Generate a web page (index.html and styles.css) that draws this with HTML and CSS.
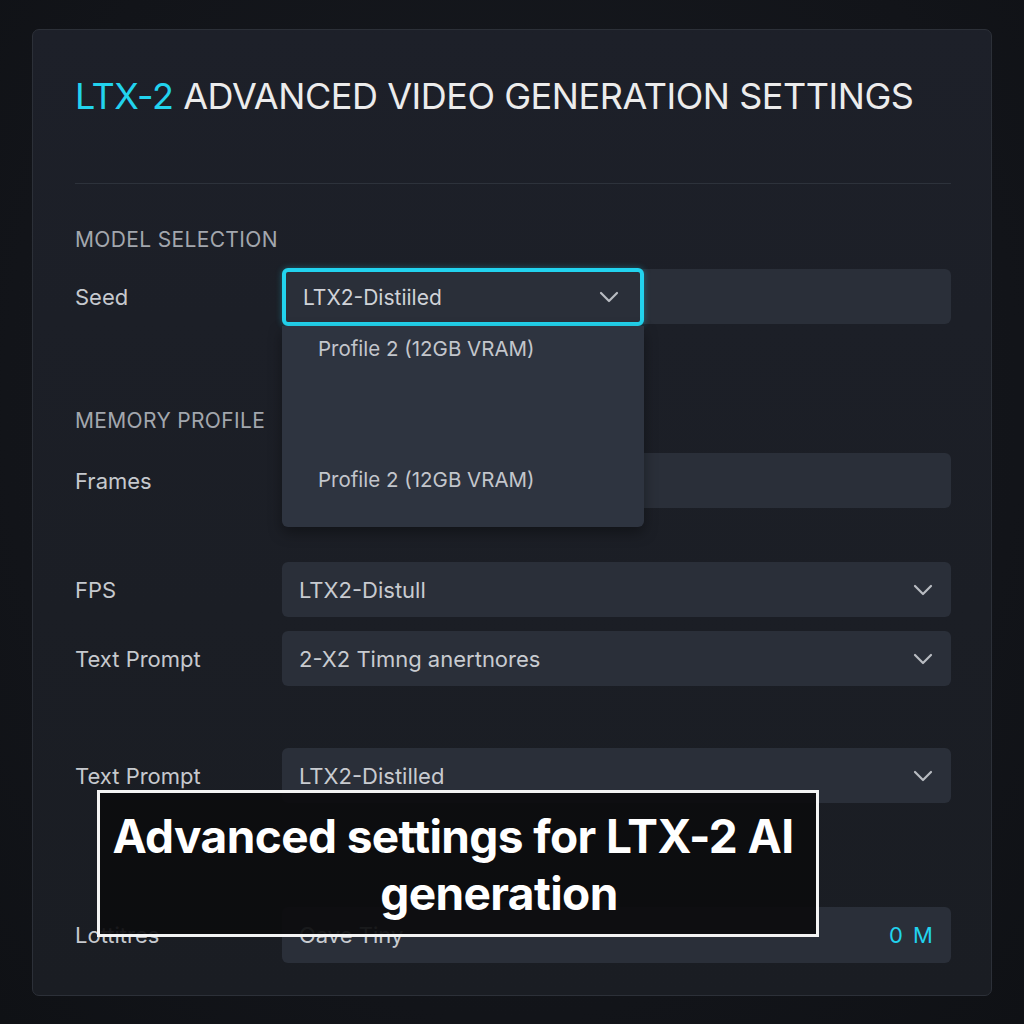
FILE: index.html
```html
<!DOCTYPE html>
<html>
<head>
<meta charset="utf-8">
<link rel="stylesheet" href="styles.css">
</head>
<body>
<div class="card">
  <h1 class="title"><span class="accent">LTX-2</span> ADVANCED VIDEO GENERATION SETTINGS</h1>
  <div class="divider"></div>

  <div class="section s-model">MODEL SELECTION</div>
  <div class="row r-seed">
    <div class="label">Seed</div>
    <div class="field empty">
      <div class="select-open">
        <div class="select-box">
          <span>LTX2-Distiiled</span>
          <svg class="chev" viewBox="0 0 20 12" width="20" height="12"><path d="M2 2 L10 10 L18 2" fill="none" stroke="#b9bcc2" stroke-width="2.2" stroke-linecap="round" stroke-linejoin="round"/></svg>
        </div>
        <div class="menu">
          <div class="menu-item">Profile 2 (12GB VRAM)</div>
          <div class="menu-item">Profile 2 (12GB VRAM)</div>
        </div>
      </div>
    </div>
  </div>

  <div class="section s-memory">MEMORY PROFILE</div>
  <div class="row r-frames">
    <div class="label">Frames</div>
    <div class="field empty"></div>
  </div>

  <div class="row r-fps">
    <div class="label">FPS</div>
    <div class="field">
      <span>LTX2-Distull</span>
      <svg class="chev" viewBox="0 0 20 12" width="20" height="12"><path d="M2 2 L10 10 L18 2" fill="none" stroke="#b9bcc2" stroke-width="2.2" stroke-linecap="round" stroke-linejoin="round"/></svg>
    </div>
  </div>

  <div class="row r-prompt1">
    <div class="label">Text Prompt</div>
    <div class="field">
      <span>2-X2 Timng anertnores</span>
      <svg class="chev" viewBox="0 0 20 12" width="20" height="12"><path d="M2 2 L10 10 L18 2" fill="none" stroke="#b9bcc2" stroke-width="2.2" stroke-linecap="round" stroke-linejoin="round"/></svg>
    </div>
  </div>

  <div class="row r-prompt2">
    <div class="label">Text Prompt</div>
    <div class="field">
      <span>LTX2-Distilled</span>
      <svg class="chev" viewBox="0 0 20 12" width="20" height="12"><path d="M2 2 L10 10 L18 2" fill="none" stroke="#b9bcc2" stroke-width="2.2" stroke-linecap="round" stroke-linejoin="round"/></svg>
    </div>
  </div>

  <div class="row r-last">
    <div class="label">Lottitres</div>
    <div class="field">
      <span>Oave Tiny</span>
      <span class="value">0 M</span>
    </div>
  </div>

  <div class="caption"><span class="cap-line">Advanced settings for LTX-2 AI</span><span class="cap-line cap-second">generation</span></div>
</div>
</body>
</html>
```

FILE: styles.css
```css
* { box-sizing: border-box; }
html, body { margin: 0; padding: 0; }
body {
  width: 1024px;
  height: 1024px;
  background: radial-gradient(ellipse at 50% 40%, #171a20 0%, #121419 70%, #0f1115 100%);
  font-family: "Inter", "Noto Sans", sans-serif;
  overflow: hidden;
}
.card {
  position: relative;
  margin: 29px 32px 0 32px;
  width: 960px;
  height: 967px;
  background: linear-gradient(180deg, #1d2029 0%, #1b1e25 60%, #1a1d23 100%);
  border: 1px solid #2c3038;
  border-radius: 7px;
  padding: 44px 40px 0 42px;
}
.title {
  margin: 0;
  height: 44px;
  line-height: 44px;
  font-size: 36px;
  font-weight: 400;
  color: #ececec;
  letter-spacing: -0.45px;
  white-space: nowrap;
}
.accent { color: #22d3ee; }
.divider {
  margin-top: 65px;
  height: 1px;
  background: #2d323b;
}
.section {
  height: 24px;
  line-height: 24px;
  font-size: 21px;
  color: #a3a7ae;
  letter-spacing: 0.35px;
}
.s-model { margin-top: 44px; }
.s-memory { margin-top: 85px; }
.row {
  display: flex;
  align-items: center;
  height: 55px;
}
.r-seed { margin-top: 17px; }
.r-frames { margin-top: 20px; }
.r-fps { margin-top: 54px; }
.r-prompt1 { margin-top: 14px; }
.r-prompt2 { margin-top: 62px; }
.r-last { margin-top: 104px; height: 56px; }
.label {
  width: 207px;
  flex: none;
  font-size: 22px;
  color: #c6c9ce;
}
.field {
  position: relative;
  flex: 1;
  height: 100%;
  background: #2a2f39;
  border-radius: 6px;
  display: flex;
  align-items: center;
  justify-content: space-between;
  padding: 0 18px 0 17px;
  font-size: 22px;
  color: #c8cbd0;
}
.chev { display: block; }
.value { color: #22d3ee; font-size: 22px; letter-spacing: 2px; margin-right: -2px; }

.select-open {
  position: absolute;
  left: 0;
  top: -1px;
  width: 362px;
  z-index: 2;
}
.select-box {
  height: 58px;
  border: 4px solid #22d3ee;
  border-radius: 6px;
  background: #2a2f39;
  display: flex;
  align-items: center;
  justify-content: space-between;
  padding: 0 21px 0 17px;
  font-size: 21px;
  color: #d0d3d8;
  box-shadow: 0 0 6px rgba(34, 211, 238, 0.35);
}
.menu {
  height: 201px;
  background: #2e3440;
  border-radius: 0 0 6px 6px;
  box-shadow: 0 6px 14px rgba(0, 0, 0, 0.35);
  padding: 0 0 0 36px;
  display: flex;
  flex-direction: column;
  justify-content: space-between;
}
.menu-item {
  font-size: 20.5px;
  color: #c3c6cc;
  height: 46px;
  line-height: 46px;
}
.menu-item:last-child { margin-bottom: 24px; }

.caption {
  position: absolute;
  left: 64px;
  top: 760px;
  width: 722px;
  height: 147px;
  background: rgba(12, 12, 14, 0.93);
  border: 3px solid #f4f4f4;
  color: #ffffff;
  font-family: "Inter", "Roboto", sans-serif;
  font-weight: 700;
  font-size: 46px;
  line-height: 57px;
  text-align: center;
  padding: 15px 10px 0 0;
  letter-spacing: -0.6px;
  z-index: 3;
}
.cap-line { display: block; white-space: nowrap; }
.cap-second { padding-left: 92px; }
```
